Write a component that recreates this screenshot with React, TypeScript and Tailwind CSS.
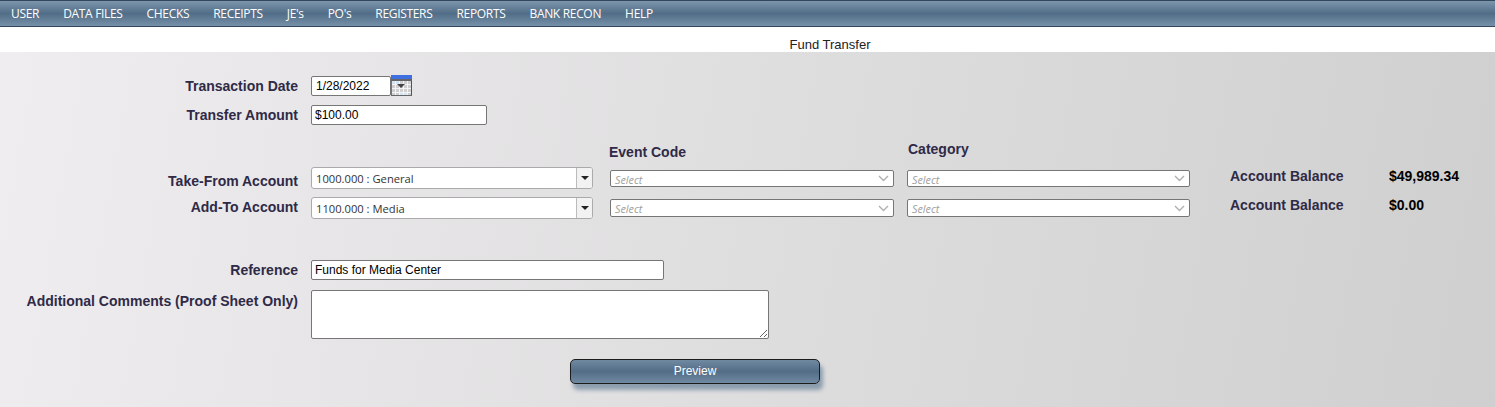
const navItems = ['USER', 'DATA FILES', 'CHECKS', 'RECEIPTS', "JE's", "PO's", 'REGISTERS', 'REPORTS', 'BANK RECON', 'HELP'];

function Label({ children }: { children: string }) {
  return <div className="w-[298px] shrink-0 text-right text-[14px] font-bold leading-[16px] text-[#2e2a47]">{children}</div>;
}

function CalendarIcon() {
  return (
    <svg width="21" height="21" viewBox="0 0 21 21" className="block" aria-hidden="true">
      <rect x="0" y="0" width="21" height="21" fill="#cfcfd2" />
      <rect x="1" y="6" width="8" height="4" fill="#d3e3f2" />
      <rect x="9" y="17" width="8" height="3" fill="#d3e3f2" />
      <rect x="0" y="0" width="21" height="4" fill="#3f6fe0" />
      <rect x="0" y="4" width="21" height="2" fill="#666666" />
      <path d="M4.5 6v14M8.5 6v14M12.5 6v14M16.5 6v14M1 9.5h19M1 13.5h19M1 17.5h19" stroke="#f4f4f4" strokeWidth="1" />
      <rect x="0" y="6" width="1" height="15" fill="#777777" />
      <rect x="20" y="6" width="1" height="15" fill="#555555" />
      <rect x="0" y="20" width="21" height="1" fill="#666666" />
      <path d="M6 9h8l-4 4z" fill="#444444" />
    </svg>
  );
}

function ComboBox({ value }: { value: string }) {
  return (
    <div className="flex h-[22px] w-[282px] shrink-0 overflow-hidden rounded-[3px] border border-[#aaaaaa] bg-white">
      <div className="flex-1 pl-[4px] pt-[1px] font-['Open_Sans',sans-serif] text-[11.2px] leading-[20px] text-[#333333]">{value}</div>
      <div className="flex w-[16px] items-center justify-center border-l border-[#bbbbbb] bg-[#f2f2f2]">
        <svg width="8" height="4" viewBox="0 0 8 4" aria-hidden="true"><path d="M0 0h8L4 4z" fill="#222222" /></svg>
      </div>
    </div>
  );
}

function SelectBox({ className }: { className: string }) {
  return (
    <div className={`flex shrink-0 items-center justify-between rounded-[2px] border border-[#767676] bg-white pl-[4px] pr-[4px] ${className}`}>
      <span className="pt-[2px] font-['Open_Sans',sans-serif] text-[10.8px] italic leading-[14px] text-[#a0a0a0]">Select</span>
      <svg width="11" height="7" viewBox="0 0 11 7" aria-hidden="true"><path d="M1 1l4.5 4.5L10 1" fill="none" stroke="#b0b0b0" strokeWidth="1.4" /></svg>
    </div>
  );
}

function BalanceText({ value }: { value: string }) {
  return (
    <div className="ml-[40px] flex text-[14px] font-bold leading-[16px]">
      <span className="w-[159px] text-[#2e2a47]">Account Balance</span>
      <span className="text-black">{value}</span>
    </div>
  );
}

export default function App() {
  return (
    <div className="flex h-[407px] w-[1495px] flex-col overflow-hidden bg-white font-['Liberation_Sans',Arial,sans-serif]">
      <nav className="flex h-[27px] shrink-0 items-center gap-[24px] border-y border-y-[#33475a] bg-[linear-gradient(to_bottom,#7c96ad_0%,#526d87_50%,#7590a8_100%)] pl-[11px] font-['Open_Sans',sans-serif] text-[12px] tracking-[-0.32px] text-white">
        {navItems.map((item) => (
          <span key={item}>{item}</span>
        ))}
      </nav>

      <div className="h-[25px] shrink-0 pl-[165px] pt-[10px] text-center text-[13px] leading-[15px] text-[#222222]">Fund Transfer</div>

      <main className="flex-1 bg-[linear-gradient(100deg,#efedef_0%,#cfcfcf_100%)] pt-[23px]">
        <div className="flex items-center">
          <Label>Transaction Date</Label>
          <div className="ml-[13px] flex items-start">
            <input readOnly value="1/28/2022" className="mt-[1px] h-[20px] w-[80px] rounded-[2px] border border-[#767676] bg-white px-[3px] pl-[4px] text-[12px] text-black outline-none" />
            <CalendarIcon />
          </div>
        </div>

        <div className="mt-[9px] flex items-center">
          <Label>Transfer Amount</Label>
          <input readOnly value="$100.00" className="ml-[13px] h-[20px] w-[176px] rounded-[2px] border border-[#767676] bg-white px-[3px] text-[12px] text-black outline-none" />
        </div>

        <div className="relative mt-[18px] h-[24px] text-[14px] font-bold leading-[16px] text-[#2e2a47]">
          <span className="absolute left-[609px] top-[1px]">Event Code</span>
          <span className="absolute left-[908px] top-[-2px]">Category</span>
        </div>

        <div className="flex items-center">
          <div className="mt-[6px]"><Label>Take-From Account</Label></div>
          <div className="ml-[13px]"><ComboBox value="1000.000 : General" /></div>
          <SelectBox className="ml-[17px] mt-[1px] h-[17px] w-[284px]" />
          <SelectBox className="ml-[13px] mt-[1px] h-[17px] w-[283px]" />
          <div className="-mt-[5px]"><BalanceText value="$49,989.34" /></div>
        </div>

        <div className="mt-[8px] flex items-center">
          <div className="mt-[-2px]"><Label>Add-To Account</Label></div>
          <div className="ml-[13px]"><ComboBox value="1100.000 : Media" /></div>
          <SelectBox className="ml-[17px] h-[18px] w-[284px]" />
          <SelectBox className="ml-[13px] h-[18px] w-[283px]" />
          <div className="-mt-[6px]"><BalanceText value="$0.00" /></div>
        </div>

        <div className="mt-[41px] flex items-center">
          <Label>Reference</Label>
          <input readOnly value="Funds for Media Center" className="ml-[13px] h-[20px] w-[353px] rounded-[2px] border border-[#767676] bg-white px-[3px] text-[12px] text-black outline-none" />
        </div>

        <div className="mt-[10px] flex items-start">
          <div className="mt-[3px]"><Label>Additional Comments (Proof Sheet Only)</Label></div>
          <textarea readOnly className="ml-[13px] block h-[49px] w-[458px] rounded-[2px] border border-[#767676] bg-white outline-none" />
        </div>

        <button type="button" className="ml-[570px] mt-[20px] block h-[25px] w-[250px] rounded-[5px] border border-[#1c1c1c] bg-[linear-gradient(to_bottom,#708aa2_0%,#536d86_50%,#708aa2_100%)] pb-[2px] text-[12px] text-white shadow-[3px_6px_4px_rgba(84,113,140,0.6)]">
          Preview
        </button>
      </main>
    </div>
  );
}
